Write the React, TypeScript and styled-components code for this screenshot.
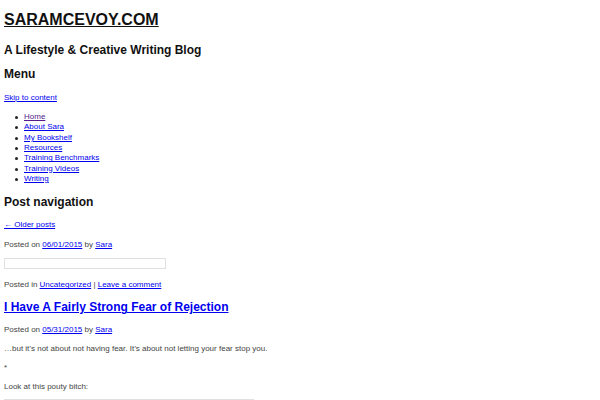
import React from 'react';
import styled, { createGlobalStyle } from 'styled-components';

const GlobalStyle = createGlobalStyle`
  html, body {
    margin: 0;
    padding: 0;
    background: #fff;
  }
  body {
    font-family: "Liberation Sans", Arial, sans-serif;
    color: #333;
  }
  a {
    color: #0000ee;
  }
`;

const Page = styled.div`
  padding: 11px 4px 0 4px;
`;

const SiteTitle = styled.h1`
  margin: 0;
  font-size: 16px;
  font-weight: bold;
  line-height: 18px;

  a {
    color: #111;
  }
`;

const Heading = styled.h2<{ $top?: number }>`
  margin: ${p => p.$top ?? 0}px 0 0 0;
  font-size: 12px;
  font-weight: bold;
  line-height: 14px;
  color: #111;
`;

const Small = styled.p<{ $top?: number }>`
  margin: ${p => p.$top ?? 0}px 0 0 0;
  font-size: 8px;
  line-height: 10px;
  color: #444;
`;

const MenuList = styled.ul`
  margin: 9px 0 0 0;
  padding: 0 0 0 20px;
  list-style: none;
  font-size: 8px;
  line-height: 10.33px;
`;

const MenuItem = styled.li<{ $visited?: boolean }>`
  position: relative;

  &::before {
    content: '';
    position: absolute;
    left: -9px;
    top: 4px;
    width: 3px;
    height: 3px;
    border-radius: 50%;
    background: #222;
  }

  a {
    color: ${p => (p.$visited ? '#551a8b' : '#0000ee')};
  }
`;

const EmptyBox = styled.div<{ $width: number; $top: number }>`
  box-sizing: border-box;
  margin-top: ${p => p.$top}px;
  width: ${p => p.$width}px;
  height: 11px;
  border: 1px solid #e0e0e0;
`;

const PostTitle = styled.h2<{ $top?: number }>`
  margin: ${p => p.$top ?? 0}px 0 0 0;
  font-size: 12px;
  font-weight: bold;
  line-height: 14px;

  a {
    color: #0000ee;
  }
`;

const Link = styled.a`
  color: #0000ee;
`;

const menu = [
  'Home',
  'About Sara',
  'My Bookshelf',
  'Resources',
  'Training Benchmarks',
  'Training Videos',
  'Writing',
];

export default function App() {
  return (
    <Page>
      <GlobalStyle />
      <SiteTitle>
        <a href="#">SARAMCEVOY.COM</a>
      </SiteTitle>
      <Heading $top={14}>A Lifestyle &amp; Creative Writing Blog</Heading>
      <Heading $top={10}>Menu</Heading>
      <Small $top={12}>
        <Link href="#">Skip to content</Link>
      </Small>
      <MenuList>
        {menu.map((item, i) => (
          <MenuItem key={item} $visited={i === 0}>
            <a href="#">{item}</a>
          </MenuItem>
        ))}
      </MenuList>
      <Heading $top={11}>Post navigation</Heading>
      <Small $top={11}>
        <Link href="#">← Older posts</Link>
      </Small>
      <Small $top={10}>
        Posted on <Link href="#">06/01/2015</Link> by <Link href="#">Sara</Link>
      </Small>
      <EmptyBox $width={162} $top={8} />
      <Small $top={11}>
        Posted in <Link href="#">Uncategorized</Link> | <Link href="#">Leave a comment</Link>
      </Small>
      <PostTitle $top={10}>
        <a href="#">I Have A Fairly Strong Fear of Rejection</a>
      </PostTitle>
      <Small $top={11}>
        Posted on <Link href="#">05/31/2015</Link> by <Link href="#">Sara</Link>
      </Small>
      <Small $top={9}>…but it’s not about not having fear. It’s about not letting your fear stop you.</Small>
      <Small $top={9}>*</Small>
      <Small $top={9}>Look at this pouty bitch:</Small>
      <EmptyBox $width={250} $top={7} />
    </Page>
  );
}
